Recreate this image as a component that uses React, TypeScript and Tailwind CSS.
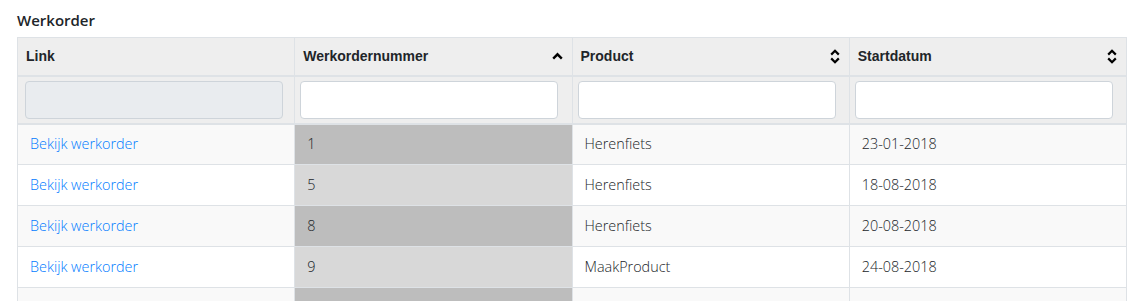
import React from 'react';

type Row = { nr: string; product: string; start: string };

const rows: Row[] = [
  { nr: '1', product: 'Herenfiets', start: '23-01-2018' },
  { nr: '5', product: 'Herenfiets', start: '18-08-2018' },
  { nr: '8', product: 'Herenfiets', start: '20-08-2018' },
  { nr: '9', product: 'MaakProduct', start: '24-08-2018' },
  // next row only peeks in under the fold
  { nr: '', product: '', start: '' },
];

const SortUp = () => (
  <svg width="11" height="8" viewBox="0 0 11 8" className="shrink-0 mr-[1px]">
    <path d="M1.2 6.6 L5.5 2.3 L9.8 6.6" fill="none" stroke="#000" strokeWidth="2.4" />
  </svg>
);

const SortBoth = () => (
  <svg width="10" height="15" viewBox="0 0 10 15" className="shrink-0 mr-[1px]">
    <path d="M1.2 5.6 L5 1.8 L8.8 5.6" fill="none" stroke="#000" strokeWidth="2.2" />
    <path d="M1.2 9.4 L5 13.2 L8.8 9.4" fill="none" stroke="#000" strokeWidth="2.2" />
  </svg>
);

const HeadCell = ({ label, sort }: { label: string; sort?: 'up' | 'both' }) => (
  <th className="border border-[#dee2e6] border-b-2 px-[8px] h-[38px] text-left align-middle font-bold text-[14px] text-[#212529] [font-family:'Liberation_Sans',Arial,sans-serif]">
    <div className="flex items-center justify-between">
      <span>{label}</span>
      {sort === 'up' && <SortUp />}
      {sort === 'both' && <SortBoth />}
    </div>
  </th>
);

const FilterCell = ({ disabled }: { disabled?: boolean }) => (
  <td className="border border-[#dee2e6] border-b-2 px-[5px] py-[4px] h-[48px]">
    <input
      disabled={disabled}
      className={`block w-[258px] h-[38px] rounded-[4px] border border-[#ced4da] ${disabled ? 'bg-[#e9ecef] ml-[2px]' : 'bg-white'}`}
    />
  </td>
);

export default function App() {
  return (
    <div className="w-[1137px] h-[301px] overflow-hidden bg-white pl-[17px] pr-[10px] [font-family:'Open_Sans','Noto_Sans',sans-serif] text-[#212529]">
      <h2 className="pt-[10px] pb-[6px] text-[15px] leading-[21px] font-semibold">Werkorder</h2>
      <table className="w-[1110px] table-fixed border-collapse">
        <thead className="bg-[#eeeeee]">
          <tr>
            <HeadCell label="Link" />
            <HeadCell label="Werkordernummer" sort="up" />
            <HeadCell label="Product" sort="both" />
            <HeadCell label="Startdatum" sort="both" />
          </tr>
          <tr>
            <FilterCell disabled />
            <FilterCell />
            <FilterCell />
            <FilterCell />
          </tr>
        </thead>
        <tbody className="text-[14.4px] font-light">
          {rows.map((r, i) => {
            const odd = i % 2 === 0;
            return (
              <tr key={i} className={odd ? 'bg-[#f9f9f9]' : 'bg-white'}>
                <td className="border border-[#dee2e6] h-[41px] px-[12px]">
                  {r.nr && <a href="#" className="text-[#007bff]">Bekijk werkorder</a>}
                </td>
                <td className={`border border-[#dee2e6] px-[12px] ${odd ? 'bg-[#bdbdbd]' : 'bg-[#d8d8d8]'}`}>{r.nr}</td>
                <td className="border border-[#dee2e6] px-[12px]">{r.product}</td>
                <td className="border border-[#dee2e6] px-[12px]">{r.start}</td>
              </tr>
            );
          })}
        </tbody>
      </table>
    </div>
  );
}
